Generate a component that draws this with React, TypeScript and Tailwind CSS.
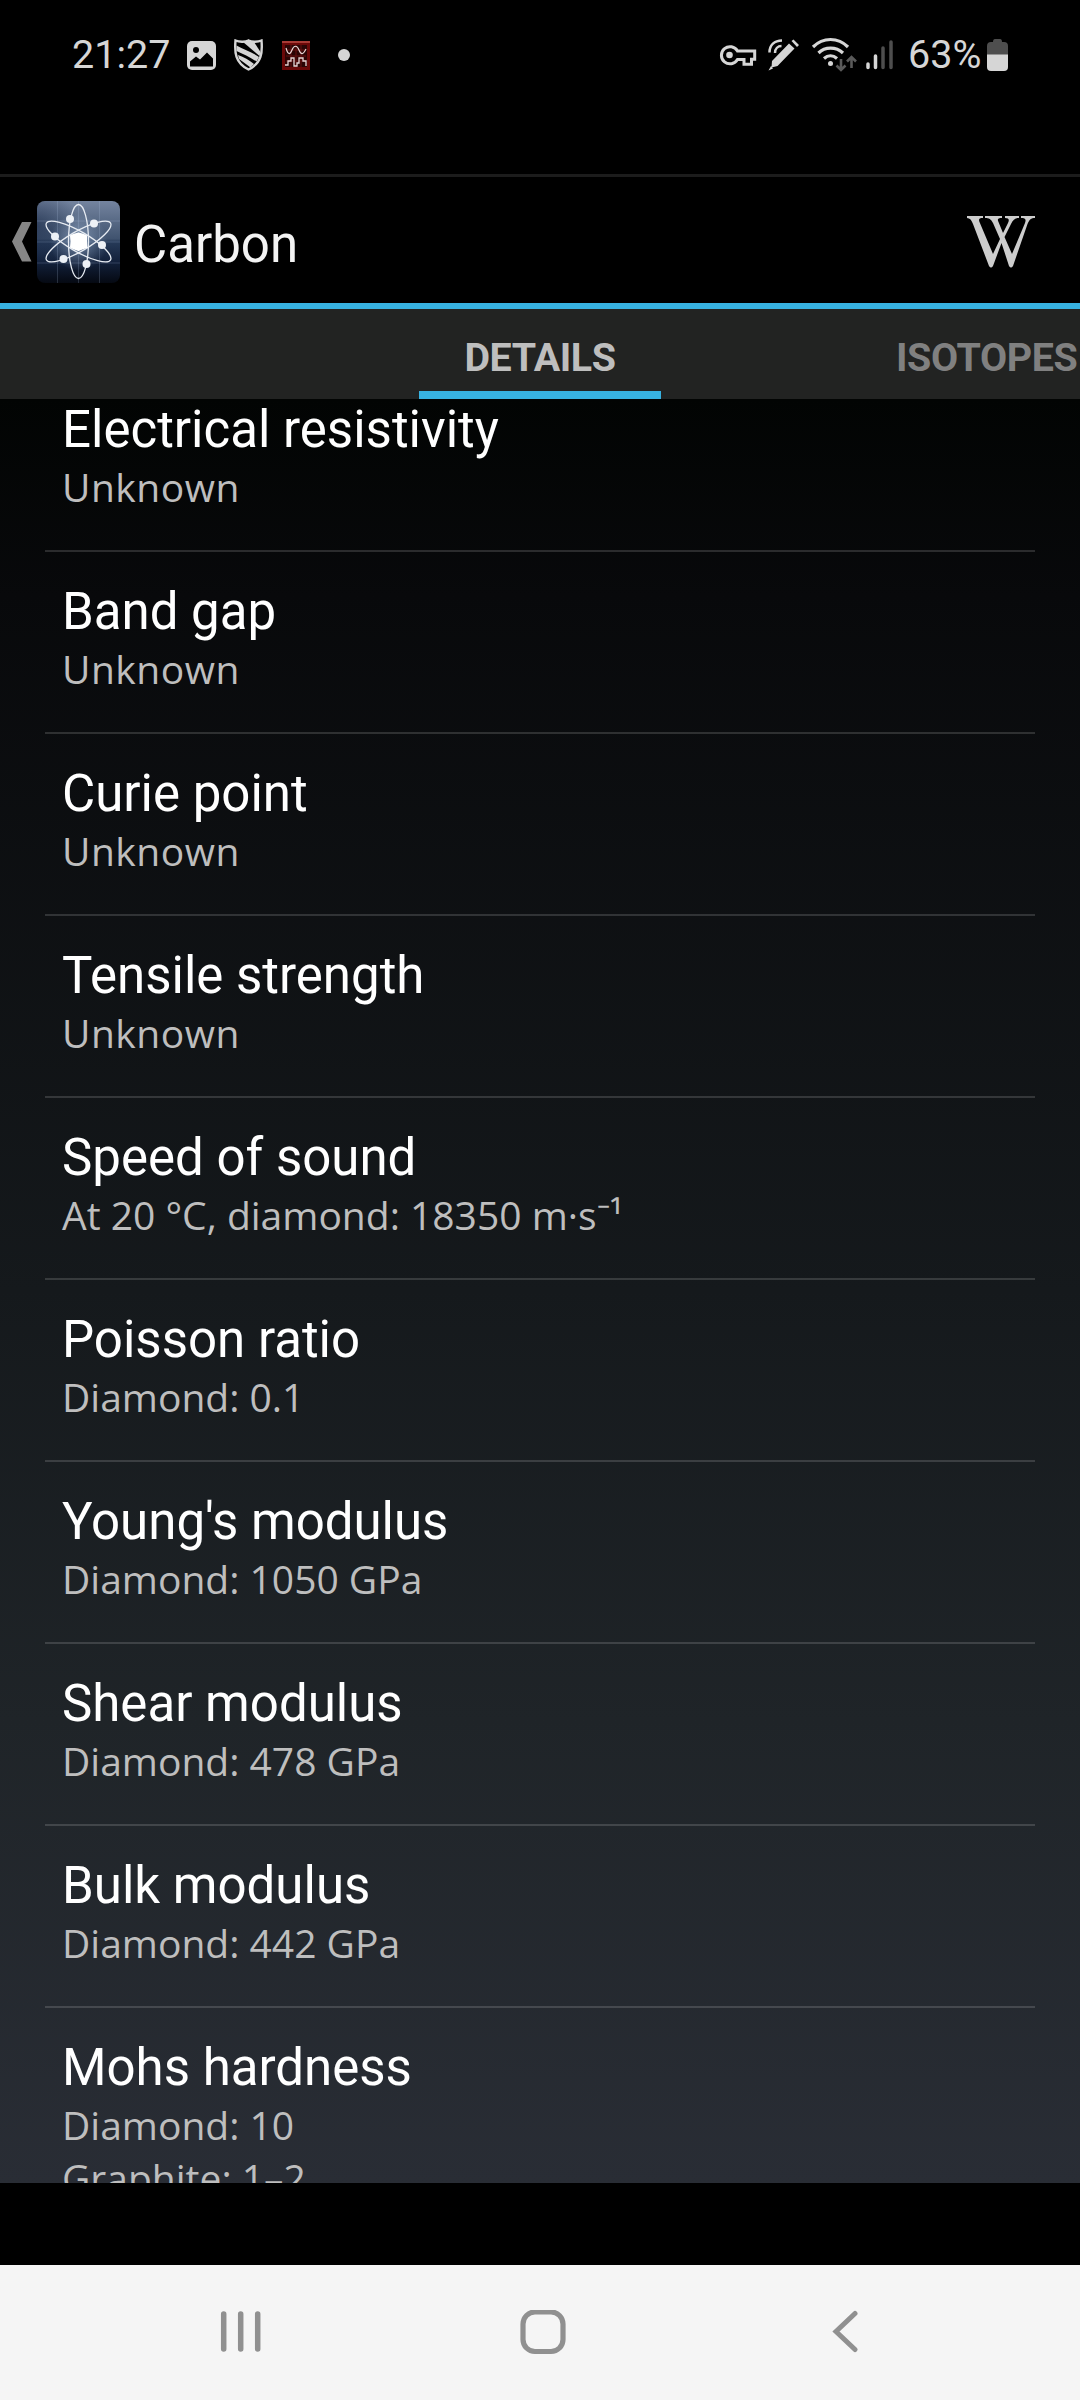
import React from "react";

const rows: { title: string; lines: string[] }[] = [
  { title: "Electrical resistivity", lines: ["Unknown"] },
  { title: "Band gap", lines: ["Unknown"] },
  { title: "Curie point", lines: ["Unknown"] },
  { title: "Tensile strength", lines: ["Unknown"] },
  { title: "Speed of sound", lines: ["At 20 °C, diamond: 18350 m·s⁻¹"] },
  { title: "Poisson ratio", lines: ["Diamond: 0.1"] },
  { title: "Young's modulus", lines: ["Diamond: 1050 GPa"] },
  { title: "Shear modulus", lines: ["Diamond: 478 GPa"] },
  { title: "Bulk modulus", lines: ["Diamond: 442 GPa"] },
  { title: "Mohs hardness", lines: ["Diamond: 10", "Graphite: 1–2"] },
];

function StatusBar() {
  return (
    <div className="flex h-[110px] shrink-0 items-center justify-between px-[72px] text-[#d6d6d6]">
      <div className="flex items-center">
        <span className="w-[115px] text-[39.5px] leading-none whitespace-nowrap">21:27</span>
        <svg className="block h-[29px] w-[29px]" viewBox="0 0 29 29">
          <rect width="29" height="29" rx="5" fill="#d6d6d6" />
          <circle cx="9" cy="9" r="3" fill="#000" />
          <path d="M3 20.500 L9 15.500 L13 18.500 L20 11.500 L26 17.500 V25.500 H3 Z" fill="#000" />
        </svg>
        <svg className="ml-[18px] block h-[32px] w-[29px]" viewBox="0 0 29 32">
          <path d="M14.500 1.500 C11 3.500 5 3 1.500 1.500 C.5 13 1 24 14.500 30.500 C28 24 28.500 13 27.500 1.500 C24 3 18 3.500 14.500 1.500Z" fill="#000" stroke="#d6d6d6" strokeWidth="2.400" />
          <path d="M9 3 L14.500 1.500 L20 3 L26.500 13 L25.500 17 Z" fill="#d6d6d6" />
          <path d="M2.500 6.500 C10 11 18 13 25 18 L22.500 22.500 C16 18 9 15 2.500 12 Z M4 16 C10 18 15 21 20 25 L16.500 28.500 C12 25 8 22 5 20Z" fill="#d6d6d6" />
        </svg>
        <svg className="ml-[19px] block h-[29px] w-[28px]" viewBox="0 0 28 29">
          <rect width="28" height="29" fill="#6a0808" />
          <rect width="28" height="2" fill="#a83a35" />
          <rect x="3" y="4" width="22" height="22" fill="#2a0505" />
          <path d="M9 4V26M14 4V26M19 4V26M4 9H24M4 15H24M4 20H24" stroke="#611" strokeWidth="1" />
          <path d="M4 7 C6 14 8 14 10 9 C12 4 15 4 17 9 C19 14 21 14 24 8" fill="none" stroke="#e8d4d4" strokeWidth="1.200" />
          <path d="M3 24H6V20H9V17H12V25H15V22H17V17H21V20H24V25" fill="none" stroke="#e8d4d4" strokeWidth="1.300" />
        </svg>
        <span className="ml-[28px] block h-[12px] w-[12px] rounded-full bg-[#d6d6d6]" />
      </div>
      <div className="flex items-center">
        <svg className="block h-[40px] w-[177px]" viewBox="719 35 177 40" fill="none" stroke="#d6d6d6">
          <path d="M737.500 51 H754.700 V59.300 H751.500 V64.300 H744 V59.500 H737.500 A8.600 8.600 0 1 1 737.500 51 Z" strokeWidth="3" />
          <circle cx="729.500" cy="55" r="3.300" fill="#d6d6d6" stroke="none" />
          <path d="M772 61 L789 43.500 L794.500 48.500 L777.500 66 L771.500 67.500 Z M791.500 41 L793.500 39.500 L799 45 L797 47 Z M771 66 L773 68.500 L768.500 70.500 Z" fill="#d6d6d6" stroke="none" />
          <path d="M769.500 52.500 C769.500 45 774.500 40.500 782 40.500 M775 53 C775 48.500 778 46 781.500 46" strokeWidth="2.500" />
          <path d="M813 47 C823 37 838 37 848 47 M818.500 53 C825 46.500 836 46.500 843 53 M824 58.500 C828 55 833 55 837 58.500" strokeWidth="3.200" />
          <circle cx="830.500" cy="63.500" r="2.500" fill="#d6d6d6" stroke="none" />
          <path d="M841 59V70 M836.500 65.500 L841 70 L845.500 65.500 M851.500 68V57 M847 61.500 L851.500 57 L856 61.500" stroke="#5a5a5a" strokeWidth="2.600" />
          <path d="M868 64V67.500 M875.500 56V67.500" strokeWidth="3.500" strokeLinecap="round" />
          <path d="M883 48V67.500 M891 42V67.500" stroke="#4e4e4e" strokeWidth="3.500" strokeLinecap="round" />
        </svg>
        <span className="ml-[12px] w-[79px] text-[39.5px] leading-none whitespace-nowrap">63%</span>
        <svg className="block h-[32px] w-[21px]" viewBox="0 0 21 32">
          <path d="M6 3 Q6 0 8 0 H13 Q15 0 15 3 H17 Q21 3 21 7 V16 H0 V7 Q0 3 4 3Z" fill="#4e4e4e" />
          <path d="M0 15.500 H21 V28 Q21 32 17 32 H4 Q0 32 0 28Z" fill="#d6d6d6" />
        </svg>
      </div>
    </div>
  );
}

function AtomIcon() {
  return (
    <svg className="mt-[24px] ml-[5px] block h-[82px] w-[83px]" viewBox="0 0 83 82">
      <defs>
        <linearGradient id="sky" x1="0" y1="0" x2="0" y2="1">
          <stop offset="0" stopColor="#74849f" />
          <stop offset="0.46" stopColor="#40536f" />
          <stop offset="0.5" stopColor="#263a58" />
          <stop offset="0.75" stopColor="#12203a" />
          <stop offset="1" stopColor="#050912" />
        </linearGradient>
        <radialGradient id="shade" cx="0" cy="0.3" r="0.5">
          <stop offset="0" stopColor="#1a2a48" stopOpacity="0.600" />
          <stop offset="1" stopColor="#1a2a48" stopOpacity="0" />
        </radialGradient>
        <radialGradient id="glow" cx="0.5" cy="0.5" r="0.35">
          <stop offset="0" stopColor="#b8cfee" stopOpacity="0.500" />
          <stop offset="1" stopColor="#b8cfee" stopOpacity="0" />
        </radialGradient>
      </defs>
      <rect width="83" height="82" rx="8" fill="url(#sky)" />
      <rect width="83" height="82" rx="8" fill="url(#shade)" />
      <rect width="83" height="82" rx="8" fill="url(#glow)" />
      <path d="M20.500 0V82M41.500 0V82M62.500 0V82M0 20H83M0 41H83M0 62H83" stroke="#b4c8e4" strokeOpacity="0.200" />
      <g fill="none" stroke="#e6ebf2" strokeWidth="1.300">
        <ellipse cx="41.500" cy="40.500" rx="10" ry="37" />
        <ellipse cx="41.500" cy="40.500" rx="10" ry="37" transform="rotate(60 41.500 40.500)" />
        <ellipse cx="41.500" cy="40.500" rx="10" ry="37" transform="rotate(-60 41.500 40.500)" />
      </g>
      <g fill="#edf1f6">
        <circle cx="33" cy="18" r="4" />
        <circle cx="57" cy="22.500" r="4" />
        <circle cx="18" cy="35.500" r="4" />
        <circle cx="65" cy="44" r="4" />
        <circle cx="26.500" cy="58" r="4" />
        <circle cx="49.500" cy="63" r="4" />
      </g>
      <path d="M41.500 32.500L45 33.500L49 35L49 40L49.500 46L45 47.500L41.500 49L37.500 47.500L34 46L34.500 40.500L34 35L38 33.500Z" fill="#fff" stroke="#fff" strokeWidth="2" strokeLinejoin="round" />
    </svg>
  );
}

function ActionBar() {
  return (
    <header className="flex h-[135px] shrink-0 items-start justify-between border-t-[3px] border-b-[6px] border-t-[#1c1c1c] border-b-[#37b2e1] pr-[45px]">
      <div className="flex items-start">
        <svg className="mt-[45px] ml-[12px] block h-[40px] w-[20px]" viewBox="0 0 20 40">
          <path d="M10 0H19.500L10 19.500L19.500 39.500H10L0 19.500Z" fill="#868686" />
        </svg>
        <AtomIcon />
        <h1 className="mt-[42px] ml-[14px] text-[51px] leading-none text-[#f3f3f3]">Carbon</h1>
      </div>
      <svg className="mt-[39px] block h-[52px] w-[68px]" viewBox="0 0 68 52" fill="#cdcdcd">
        <path d="M0 0H16V2C12 2 11.500 3 12.500 6L26 38L33 23L26 7C24 3 22 2 18 2V0H35V2C31 2 30 3 31.500 6L36 17L41 7C42.500 3.500 42 2 38 2V0H52V2C48 2 46 4 44 8L37.500 21L45 38L58 7C59.500 3 58 2 54 2V0H68V2C64 2 62.500 3.500 60.500 8L46 50Q44 53 42 50L34.500 27L26 50Q24 53 22 50L6 8C4.500 4 3 2 0 2Z" />
      </svg>
    </header>
  );
}

function Tabs() {
  return (
    <div className="flex h-[90px] shrink-0 overflow-hidden bg-[#222322] text-[39.4px] leading-none font-bold tracking-[-0.4px]">
      <div className="w-[419px] shrink-0" />
      <div className="flex w-[242px] shrink-0 justify-center border-b-[8px] border-[#37b2e1] pt-[29px] text-[#bebebe]">
        <span>DETAILS</span>
      </div>
      <div className="ml-[235px] pt-[29px] text-[#808080]">ISOTOPES</div>
    </div>
  );
}

function NavBar() {
  return (
    <nav className="flex h-[135px] shrink-0 bg-[#f5f5f5] pt-[45px]">
      <svg className="ml-[220px] block h-[44px] w-[42px]" viewBox="0 0 42 44">
        <path d="M3.700 4V39M20.700 4V39M37.700 4V39" stroke="#909090" strokeWidth="5.500" strokeLinecap="round" />
      </svg>
      <svg className="ml-[257px] block h-[48px] w-[48px]" viewBox="0 0 48 48">
        <rect x="4" y="2" width="40" height="39.500" rx="12" fill="none" stroke="#909090" strokeWidth="5.200" />
      </svg>
      <svg className="ml-[264px] block h-[44px] w-[28px]" viewBox="0 0 28 44">
        <path d="M24 3.500L5 21.500L24 39.500" fill="none" stroke="#909090" strokeWidth="5" strokeLinecap="round" />
      </svg>
    </nav>
  );
}

export default function App() {
  return (
    <div className="flex h-[2400px] w-[1080px] flex-col overflow-hidden bg-black font-[Roboto,sans-serif]">
      <StatusBar />
      <div className="h-[64px] shrink-0" />
      <ActionBar />
      <Tabs />
      <main className="h-[1784px] shrink-0 overflow-hidden bg-[linear-gradient(to_bottom,#020403_0%,#08090b_11%,#15191c_50%,#1f2428_74%,#292d35_100%)]">
        <ul className="-mt-[29px] px-[45px]">
          {rows.map((r) => (
            <li key={r.title} className="min-h-[182px] border-b-2 border-white/15 pt-[28px] pl-[17px]">
              <h2 className="h-[62px] text-[51px] leading-[63px] font-normal text-white">{r.title}</h2>
              {r.lines.map((l) => (
                <p
                  key={l}
                  className={
                    l === "Unknown"
                      ? "font-['Open_Sans',sans-serif] text-[39px] leading-[53px] tracking-[0.5px] text-[#bebebe]"
                      : "font-['Open_Sans',sans-serif] text-[39px] leading-[53px] text-[#bebebe]"
                  }
                >
                  {l}
                </p>
              ))}
            </li>
          ))}
        </ul>
      </main>
      <div className="h-[82px] shrink-0" />
      <NavBar />
    </div>
  );
}
